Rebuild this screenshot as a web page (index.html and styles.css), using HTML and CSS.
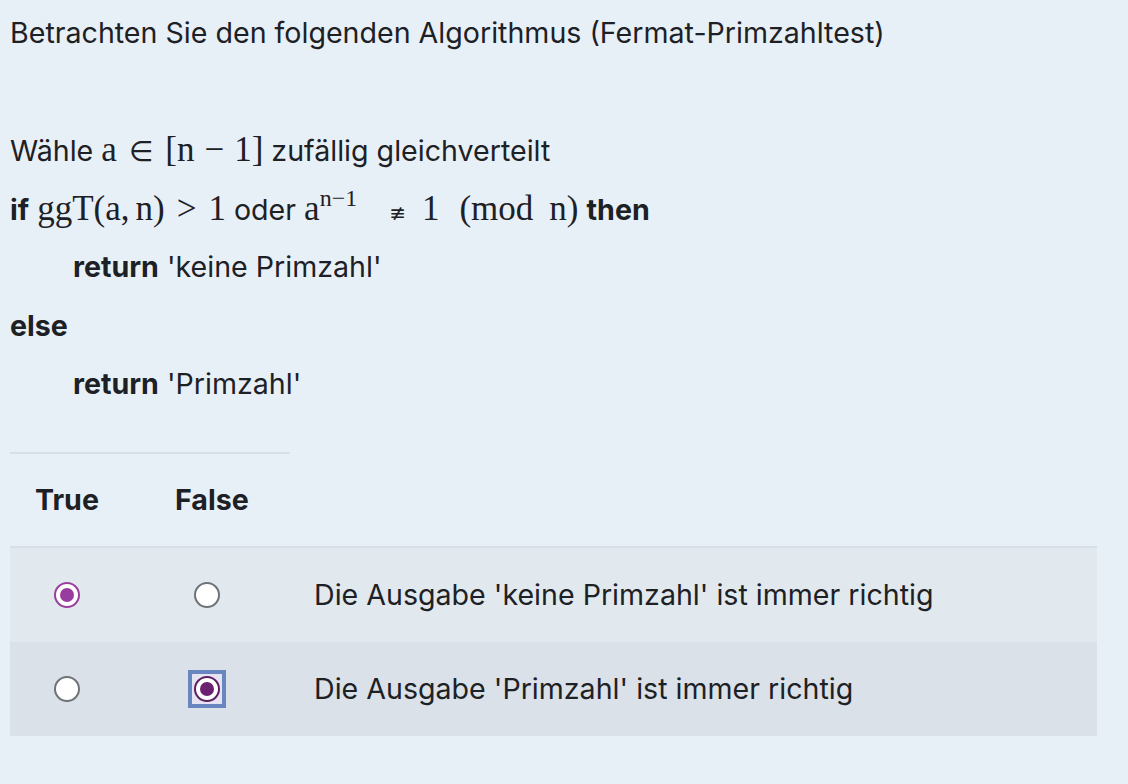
FILE: index.html
```html
<!DOCTYPE html>
<html lang="de">
<head>
<meta charset="utf-8">
<link rel="stylesheet" href="styles.css">
</head>
<body>
<div class="question">
  <div class="line">Betrachten Sie den folgenden Algorithmus (Fermat-Primzahltest)</div>
  <div class="line"></div>
  <div class="line">Wähle <span class="math">a<span class="rel op">∈</span>[n<span class="bin">−</span>1]</span> zufällig gleichverteilt</div>
  <div class="line"><b>if</b> <span class="math">ggT(a,<span class="thin"></span>n)<span class="rel">&gt;</span>1</span> oder <span class="math">a<sup>n−1</sup><span class="neq">≢</span>1<span class="quad"></span>(mod<span class="quad2"></span>n)</span> <b>then</b></div>
  <div class="line indent"><b>return</b> 'keine Primzahl'</div>
  <div class="line"><b>else</b></div>
  <div class="line indent"><b>return</b> 'Primzahl'</div>
</div>

<table class="answers">
  <thead>
    <tr>
      <th class="col-choice">True</th>
      <th class="col-choice">False</th>
      <th class="col-text"></th>
    </tr>
  </thead>
  <tbody>
    <tr class="row-a">
      <td class="cell-radio"><span class="radio checked"></span></td>
      <td class="cell-radio"><span class="radio"></span></td>
      <td class="cell-text">Die Ausgabe 'keine Primzahl' ist immer richtig</td>
    </tr>
    <tr class="row-b">
      <td class="cell-radio"><span class="radio"></span></td>
      <td class="cell-radio"><span class="focus"><span class="radio checked dark"></span></span></td>
      <td class="cell-text">Die Ausgabe 'Primzahl' ist immer richtig</td>
    </tr>
  </tbody>
</table>
</body>
</html>
```
FILE: styles.css
```css
html, body {
  margin: 0;
  padding: 0;
  background: #e8f0f7;
}
body {
  padding: 4px 10px 0 10px;
  font-family: Inter, "Noto Sans", sans-serif;
  font-size: 28.6px;
  color: #1d2125;
}
.question .line {
  height: 58.5px;
  line-height: 58.5px;
  white-space: nowrap;
}
.question .indent {
  padding-left: 63px;
}
.question b {
  font-weight: 700;
}
.math {
  font-family: "Liberation Serif", "DejaVu Serif", serif;
  font-size: 35px;
}
.math .rel {
  display: inline-block;
  margin: 0 12px;
}
.math .bin {
  display: inline-block;
  margin: 0 10px;
}
.math .op {
  font-family: "DejaVu Sans", sans-serif;
  font-size: 28px;
}
.math .thin {
  display: inline-block;
  width: 6px;
}
.math .quad {
  display: inline-block;
  width: 20px;
}
.math .quad2 {
  display: inline-block;
  width: 16px;
}
.math sup {
  font-size: 24px;
  line-height: 0;
  vertical-align: 14px;
}
.math .neq {
  display: inline-block;
  font-family: "DejaVu Sans", sans-serif;
  font-size: 20px;
  margin-left: 32px;
  margin-right: 16px;
}
.answers {
  margin-top: 38px;
  border-collapse: collapse;
  width: 1087px;
}
.answers th {
  text-align: left;
  font-weight: 700;
  height: 92px;
  padding: 0 0 0 25px;
  border-bottom: 2px solid #d8dfe6;
  vertical-align: middle;
}
.answers th.col-choice {
  width: 115px;
  border-top: 2px solid #d8dfe6;
}
.answers td {
  height: 94px;
  padding: 0;
  vertical-align: middle;
}
.row-a { background: #e1e9ee; }
.row-b { background: #dae1e8; }
.answers td.cell-radio {
  padding-left: 44px;
  font-size: 0;
  line-height: 0;
}
.answers td.cell-text {
  padding-left: 24px;
}
.radio {
  display: inline-block;
  box-sizing: border-box;
  width: 26px;
  height: 26px;
  border-radius: 50%;
  border: 2px solid #6e7378;
  background: #fff;
  vertical-align: middle;
  position: relative;
}
.radio.checked {
  border-color: #9a3f9e;
}
.radio.checked::after {
  content: "";
  position: absolute;
  left: 4px;
  top: 4px;
  width: 14px;
  height: 14px;
  border-radius: 50%;
  background: #993c9f;
}
.radio.dark {
  border-color: #5e1f5f;
}
.radio.dark::after {
  background: #6b2170;
}
.focus {
  display: inline-flex;
  align-items: center;
  justify-content: center;
  box-sizing: border-box;
  width: 38px;
  height: 38px;
  margin-left: -6px;
  background: #e6e3f3;
  border: 4px solid #6a86c0;
  vertical-align: middle;
}
```
